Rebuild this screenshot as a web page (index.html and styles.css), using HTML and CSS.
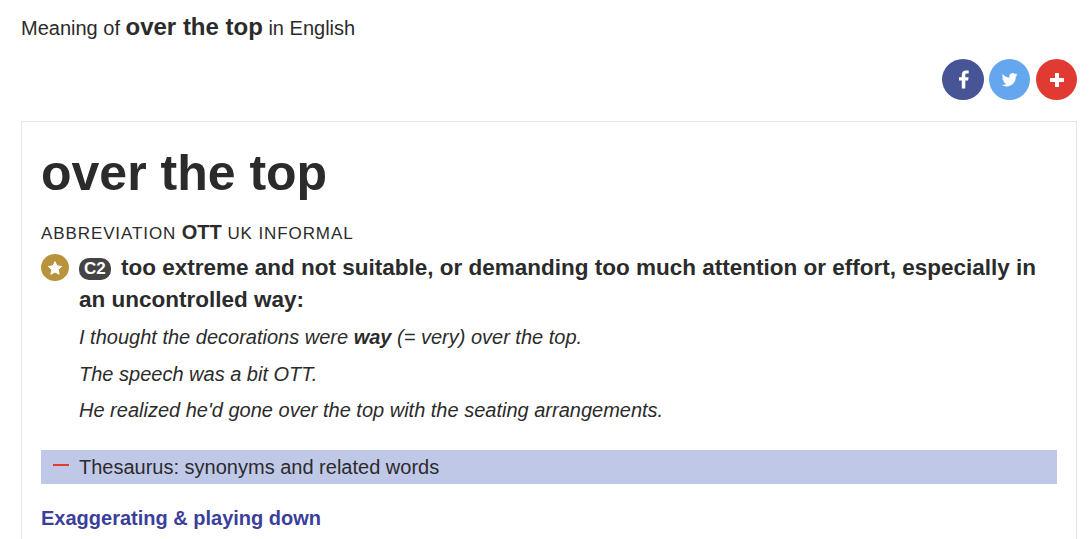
FILE: index.html
```html
<!DOCTYPE html>
<html lang="en">
<head>
<meta charset="utf-8">
<title>over the top</title>
<link rel="stylesheet" href="styles.css">
</head>
<body>
<main class="page">
  <h1 class="meaning">Meaning of <b class="meaning-word">over the top</b> in English</h1>
  <div class="share">
    <a class="circle fb" href="#"><svg viewBox="0 0 24 24" width="27" height="27"><path fill="#fff" d="M13.6 20v-7.200h2.500l.4-2.900h-2.900V8.100c0-.8.3-1.400 1.400-1.400h1.600V4.100c-.3 0-1.200-.1-2.300-.1-2.300 0-3.800 1.400-3.800 3.800v2.100H8v2.900h2.500V20z"/></svg></a>
    <a class="circle tw" href="#"><svg viewBox="0 0 24 24" width="17" height="17"><path fill="#fff" d="M23 5.100c-.8.4-1.700.6-2.600.7.900-.6 1.600-1.400 2-2.500-.9.500-1.900.9-2.900 1.100A4.500 4.500 0 0 0 11.800 8.500c0 .4 0 .7.100 1C8.100 9.300 4.800 7.500 2.500 4.700c-.4.700-.6 1.500-.6 2.300 0 1.600.8 3 2 3.800-.7 0-1.400-.2-2-.6v.1c0 2.200 1.600 4 3.600 4.400-.7.200-1.400.2-2 .1.600 1.800 2.300 3.100 4.200 3.100A9.100 9.100 0 0 1 1 19.800a12.800 12.800 0 0 0 6.900 2c8.300 0 12.900-6.900 12.900-12.900v-.6c.9-.6 1.600-1.400 2.200-3.200z"/></svg></a>
    <a class="circle plus" href="#"><svg viewBox="0 0 24 24" width="24" height="24"><path fill="#fff" d="M10 5h4v5h5v4h-5v5h-4v-5H5v-4h5z"/></svg></a>
  </div>
  <section class="card">
    <h2 class="headword">over the top</h2>
    <div class="labels">abbreviation <b class="abbr">OTT</b> UK informal</div>
    <div class="sense">
      <span class="star"><svg viewBox="0 0 24 24" width="16" height="16"><path fill="#fff" stroke="#fff" stroke-width="1.500" stroke-linejoin="round" d="M12 2.500l3 6.300 6.900.9-5 4.800 1.300 6.900-6.200-3.300-6.200 3.300 1.300-6.900-5-4.800 6.900-.9z"/></svg></span>
      <div class="sense-body">
        <p class="def"><span class="level">C2</span> too extreme and not suitable, or demanding too much attention or effort, especially in an uncontrolled way:</p>
        <p class="example">I thought the decorations were <b>way</b> (= very) over the top.</p>
        <p class="example">The speech was a bit OTT.</p>
        <p class="example">He realized he'd gone over the top with the seating arrangements.</p>
      </div>
    </div>
    <div class="thesaurus"><span class="minus"></span>Thesaurus: synonyms and related words</div>
    <h3 class="topic">Exaggerating &amp; playing down</h3>
  </section>
</main>
</body>
</html>
```

FILE: styles.css
```css
html, body {
  margin: 0;
  height: 100%;
  overflow: hidden;
  background: #fff;
}
body {
  font-family: "Liberation Sans", Arial, sans-serif;
  color: #2b2b2b;
}
.page {
  padding: 14px 14px 0 21px;
}
.meaning {
  margin: 0;
  height: 26px;
  font-size: 20px;
  font-weight: 400;
  line-height: 26px;
}
.meaning-word {
  font-size: 24px;
  font-weight: 700;
}
.share {
  display: flex;
  justify-content: flex-end;
  margin-top: 19px;
}
.circle {
  width: 41px;
  height: 41px;
  border-radius: 50%;
  display: flex;
  align-items: center;
  justify-content: center;
}
.fb {
  width: 42px;
  margin-right: 5px;
  background: #475496;
}
.tw {
  margin-right: 6px;
  background: #65a7ee;
}
.plus {
  background: #e03a32;
}
.card {
  margin-top: 21px;
  border: 1px solid #e5e5e5;
  padding: 19px 19px 40px;
}
.headword {
  margin: 0;
  font-size: 50px;
  font-weight: 700;
  line-height: 64px;
}
.labels {
  margin-top: 15px;
  font-size: 17px;
  letter-spacing: 0.9px;
  line-height: 24px;
  text-transform: uppercase;
}
.abbr {
  font-size: 20px;
  letter-spacing: 0;
}
.sense {
  display: flex;
  gap: 10px;
  margin-top: 6px;
}
.star {
  flex: none;
  width: 28px;
  height: 27px;
  border-radius: 50%;
  background: #b9933b;
  display: flex;
  align-items: center;
  justify-content: center;
  margin-top: 2px;
}
.sense-body {
  flex: 1;
}
.def {
  margin: 0;
  font-size: 22.500px;
  font-weight: 700;
  line-height: 32px;
}
.level {
  display: inline-block;
  background: #444;
  color: #fff;
  font-size: 17px;
  line-height: 22px;
  padding: 0 5px;
  border-radius: 10px;
  margin-right: 4px;
  vertical-align: 1px;
}
.example {
  margin: 6px 0 0;
  font-size: 20px;
  font-style: italic;
  line-height: 30.500px;
}
.thesaurus {
  margin-top: 24px;
  background: #c0c8e8;
  height: 34px;
  line-height: 34px;
  font-size: 20px;
  display: flex;
  align-items: center;
}
.minus {
  width: 16px;
  height: 2px;
  background: #e03a32;
  margin: 0 10px 0 12px;
  position: relative;
  top: -2px;
}
.topic {
  margin: 18px 0 0;
  font-size: 20px;
  font-weight: 700;
  line-height: 32px;
  color: #3b3f99;
}
```
